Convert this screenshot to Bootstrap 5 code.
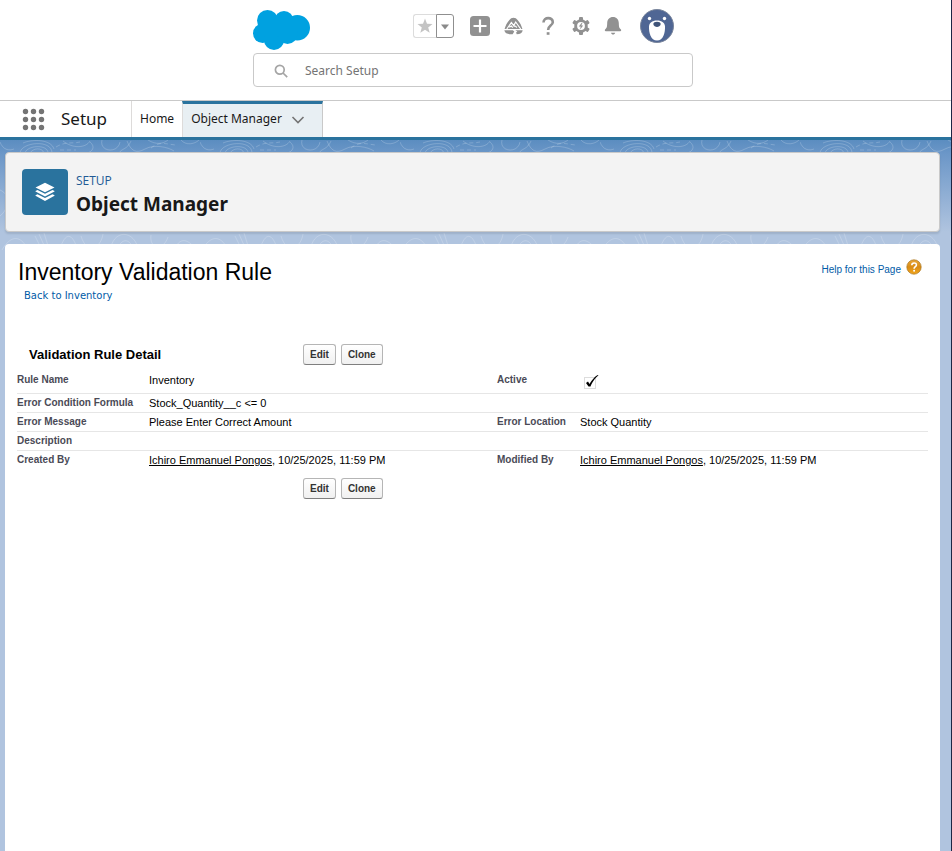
<!DOCTYPE html>
<html lang="en">
<head>
<meta charset="utf-8">
<meta name="viewport" content="width=device-width, initial-scale=1">
<title>Object Manager | Setup</title>
<link href="https://cdn.jsdelivr.net/npm/bootstrap@5.3.0/dist/css/bootstrap.min.css" rel="stylesheet">
<style>
  :root { --brand: #2a739e; --edge: #c9c9c9; --link: #015ba7; --icon: #919191; }
  body { font-family: "Noto Sans", "Open Sans", sans-serif; font-size: 12px; line-height: 20px; color: #181818; border-right: 1px solid #1d2745; }
  a { text-decoration: none; color: inherit; }
  a:hover { text-decoration: underline; }
  svg { display: block; flex: none; }

  .site-top { padding: 9px 5px 13px 0; border-bottom: 1px solid var(--edge); }
  .site-inner { width: 100%; max-width: 440px; }
  .tool-row { height: 44px; }
  .tools { margin-right: 19px; padding-bottom: 10px; gap: 14px; }
  .tool-btn { padding: 0; border: 0; background: none; color: var(--icon); }
  .fav { height: 24px; margin-right: 2px; }
  .fav-star, .fav-more { padding: 0; background: #fff; border: 1px solid #dcdcdc; }
  .fav-star { width: 23px; border-radius: 3px 0 0 3px; border-right: 0; }
  .fav-more { width: 18px; border-color: #8f8f8f; border-radius: 0 3px 3px 0; }
  .search-box { height: 34px; border: 1px solid var(--edge); border-radius: 4px; padding: 2px 0 0 20px; gap: 17px; }
  .search-box input { border: 0; outline: 0; padding: 0; font-size: 12px; color: #444; }
  .search-box input::placeholder { color: #747474; opacity: 1; }

  .app-nav { height: 39px; border-bottom: 3px solid var(--brand); }
  .waffle { padding: 0; border: 0; background: none; margin: 0 16px 0 22px; }
  .app-name { font-size: 17px; width: 70px; white-space: nowrap; }
  .tab-item { padding: 0 8px; border-left: 1px solid #dddbda; }
  .tab-current { background: #e8eff3; border-top: 3px solid var(--brand); border-right: 1px solid var(--edge); padding: 0 17px 3px 8px; gap: 9px; }
  .tab-current button { padding: 0; border: 0; background: none; }

  .stage {
    padding: 12px 11px 0 5px; gap: 12px;
    background-color: #b0c4df;
    background-image:
      url("data:image/svg+xml,%3Csvg xmlns='http://www.w3.org/2000/svg' width='200' height='112' fill='none' stroke='%23fff' stroke-opacity='.28' stroke-width='.7'%3E%3Cpath d='M0 2c3 8 9 9 14 7M20 13c1-11 32-14 32 0M25 13c2-8 23-9 23 0M30 13c3-5 12-6 14 0M23 3c9-4 28-4 31 6M131 1c-4 9-9 7-12 12M63 1c10 8 23 7 27 0M90 2c6 5 2 10-3 11M102 0c-3 12 16 14 18 2M127 1c4 10 9 13 18 8s23-2 29 2M148 0c8 5 15 4 20 0M181 0c5 6 14 4 18 0M0 50c12 5 8 20 0 26M197 40c-7 10-4 22 3 28M2 110c8-14 17-15 24-4M10 112c3-8 9-9 12 0M35 96l8 16M39 94l8 18M44 93l6 19M59 112c5-18 12-22 18-4M81 96c6 20 20 12 22-2M110 112c2-23 25-24 29 0M117 112c3-15 14-15 17 0M121 112c3-8 6-8 9 0M151 95c-2 14 12 17 17 2M173 112c7-17 15-12 22-4'/%3E%3Cpath d='M56 7c10-6 16-3 24-5M60 10h16M151 8c10-8 17-3 26-3' stroke-dasharray='4 3'/%3E%3C/svg%3E"),
      linear-gradient(#5b8dc0 0, #6c97c8 14px, #b0c4df 92px);
    background-repeat: repeat-x, no-repeat;
  }
  .head-card { background: #f3f3f3; border: 1px solid var(--edge); border-radius: 4px; box-shadow: 0 2px 2px rgba(0,0,0,.1); padding: 16px; gap: 8px; }
  .head-icon { width: 46px; height: 46px; border-radius: 4px; background: var(--brand); }
  .head-text { padding-top: 2px; }
  .head-over { font-family: "Open Sans", sans-serif; font-size: 12px; line-height: 20px; color: #215a95; }
  .head-title { font-size: 19px; line-height: 26px; font-weight: 700; margin: 0 0 -2px; }

  .sheet { background: #fff; border-radius: 4px 4px 0 0; padding: 14px 12px; font-family: "Liberation Sans", Arial, sans-serif; color: #000; }
  .sheet-title { font-size: 23px; line-height: 28px; margin: 0 0 0 1px; }
  .back-link { font-family: "DejaVu Sans", Verdana, sans-serif; font-size: 10px; line-height: 20px; color: var(--link); margin-left: 7px; }
  .help-link { font-size: 10px; color: var(--link); padding-right: 6px; gap: 5px; }
  .help-link span { padding-top: 2px; }
  .bar { gap: 5px; }
  .bar-top { margin-top: 38px; margin-bottom: 6px; }
  .bar-bottom { margin-top: 9px; }
  .bar-title { font-size: 13px; line-height: 20px; font-weight: 700; margin: 0; padding-left: 12px; }
  .bar-lead { width: 281px; flex: none; }
  .btn-classic { font-size: 10px; line-height: 13px; font-weight: 700; color: #333; padding: 3px 6px; border: 1px solid #b5b5b5; border-bottom-color: #7f7f7f; border-radius: 3px; background: linear-gradient(#fff, #f0f0f0); }
  .detail { width: 100%; table-layout: fixed; }
  .detail tr + tr { border-top: 1px solid #e6e6e6; }
  .detail th, .detail td { padding: 0; vertical-align: top; line-height: 18px; height: 18px; }
  .detail th { font-size: 10px; color: #4a4a56; white-space: nowrap; }
  .detail td { font-size: 11px; }
  .detail .tall > * { height: 22px; }
  .detail a { text-decoration: underline; }
  .col-label-a { width: 132px; }
  .col-label-b { width: 83px; }
  .tick { appearance: none; display: block; width: 16px; height: 14px; margin: 4px 0 0 4px; opacity: 1;
    background: url("data:image/svg+xml,%3Csvg xmlns='http://www.w3.org/2000/svg' width='16' height='14'%3E%3Crect x='.5' y='2.5' width='11' height='11' fill='none' stroke='%23bbb' stroke-dasharray='1 1'/%3E%3Cpath d='M2 8l2-1.500 1.500 2.500C8 5 11 1 14 0l.4.6C11 3 8 8 6.500 11.500H4.500Z'/%3E%3C/svg%3E") no-repeat; }
</style>
</head>
<body class="d-flex flex-column min-vh-100">

<header class="site-top">
  <div class="site-inner mx-auto">
    <div class="tool-row d-flex justify-content-between">
      <a href="#" aria-label="Salesforce home">
        <svg width="57" height="41" viewBox="0 0 57 41" fill="#00a1e0"><circle cx="14.500" cy="11.500" r="10.500"/><circle cx="31" cy="11.500" r="9.500"/><circle cx="44.300" cy="18.700" r="12.700"/><circle cx="9.700" cy="24.300" r="9.700"/><circle cx="21" cy="31" r="10"/><circle cx="34.500" cy="25" r="10"/><path d="M10 12h34v15H10z"/></svg>
      </a>
      <div class="tools d-flex align-items-center">
        <div class="fav d-flex">
          <button class="fav-star d-flex align-items-center justify-content-center" aria-label="Favorite this page"><svg width="16" height="16" viewBox="0 0 16 16" fill="#c4c4c4"><path d="M8 .6l2 5.200 5.500.2-4.300 3.400 1.500 5.400L8 11.700l-4.700 3.100 1.500-5.400L.5 6l5.500-.2z"/></svg></button>
          <button class="fav-more d-flex align-items-center justify-content-center" aria-label="Favorites list"><svg width="10" height="8" viewBox="0 0 10 8" fill="#8a8a8a"><path d="M1 2.500h8L5 7.500z"/></svg></button>
        </div>
        <button class="tool-btn" aria-label="Global actions"><svg width="20" height="20" viewBox="0 0 20 20"><rect width="20" height="20" rx="3.500" fill="currentColor"/><path d="M10 3.500v13M3.500 10h13" stroke="#fff" stroke-width="2.200"/></svg></button>
        <button class="tool-btn" aria-label="Guidance center"><svg width="20" height="20" viewBox="0 0 20 20" fill="currentColor"><path d="M5.200 4.200C7.500.9 11.500.9 13.800 4.200c2.200 2.500 3.800 5.500 4.600 8.800H.6c.8-3.300 2.400-6.300 4.600-8.800z"/><path d="M.3 14.300h8.500l1.500 1.200-1.700 2.700C4.500 18.500 1 17.700.3 14.300zM11.300 14.300h7.400c-.4 2.500-2.300 3.900-6 4l-.6-1.800 1.300-.9z"/><path d="M2.800 13l4.600-6.400 2.300 3 2-3.600 5 7M5.300 11.300l2-1.300 1.500 1.600M9.800 9.800l1.700.4 1.300 1.300" fill="none" stroke="#fff" stroke-width="1.200"/></svg></button>
        <button class="tool-btn" aria-label="Salesforce help"><svg width="20" height="20" viewBox="-1 0 20 20" fill="none" stroke="currentColor" stroke-width="2.600"><path d="M4.500 6.500C4.500.5 14 .8 13.800 6.200c-.2 3.600-4.700 3.300-4.700 7.800"/><path d="M7.700 17.500h2.800"/></svg></button>
        <button class="tool-btn" aria-label="Setup"><svg width="18" height="20" viewBox="0 0 18 20"><g fill="currentColor"><circle cx="9" cy="10" r="6.800"/><rect x="7" y="1" width="4" height="18" rx="1"/><rect x="7" y="1" width="4" height="18" rx="1" transform="rotate(60 9 10)"/><rect x="7" y="1" width="4" height="18" rx="1" transform="rotate(120 9 10)"/></g><circle cx="9" cy="10" r="3.900" fill="#fff"/><path d="M9.800 6.800L6.800 10.500h1.900l-.6 3 3.100-4H9.300l1.200-2.700z" fill="#919191"/></svg></button>
        <button class="tool-btn" aria-label="Notifications"><svg width="18" height="20" viewBox="0 0 18 20" fill="currentColor"><path d="M9 1C5.500 1 3.300 3.500 3.200 7c-.1 4-.4 5-1.900 6.200-.8.700-.6 2 .5 2h14.400c1.100 0 1.300-1.300.5-2C15.200 12 14.900 11 14.800 7 14.700 3.500 12.500 1 9 1zM7 16.800h4.200C10.700 19.200 7.500 19.200 7 16.800z"/></svg></button>
        <button class="tool-btn ms-1" aria-label="View profile"><svg width="34" height="34" viewBox="0 0 34 34"><circle cx="17" cy="17" r="16.500" fill="#4f6694" stroke="#7a869c"/><circle cx="9.500" cy="9.500" r="1.700" fill="#fff"/><circle cx="24.500" cy="9.500" r="1.700" fill="#fff"/><path d="M17 11.500c5 0 7.800 2.500 8 6 .2 6-1.600 14-8 14s-8.200-8-8-14c.2-3.500 3-6 8-6z" fill="#fff"/><path d="M13.300 15c0-2.900 7.400-2.900 7.400 0 0 2-2.400 3-3.700 3s-3.700-1-3.700-3z" fill="#3f5378"/></svg></button>
      </div>
    </div>
    <div class="search-box d-flex align-items-center">
      <svg width="14" height="14" viewBox="0 0 14 14" fill="none" stroke="#a5a5a5" stroke-width="1.700"><circle cx="5.800" cy="5.800" r="4.400"/><path d="M9 9l4.200 4.200"/></svg>
      <input class="flex-grow-1" type="search" placeholder="Search Setup" aria-label="Search Setup">
    </div>
  </div>
</header>

<nav class="app-nav d-flex align-items-stretch" aria-label="Setup">
  <button class="waffle" aria-label="App launcher"><svg width="23" height="23" viewBox="0 0 23 23" fill="#747474"><circle cx="3.500" cy="3.500" r="2.700"/><circle cx="11.500" cy="3.500" r="2.700"/><circle cx="19.500" cy="3.500" r="2.700"/><circle cx="3.500" cy="11.500" r="2.700"/><circle cx="11.500" cy="11.500" r="2.700"/><circle cx="19.500" cy="11.500" r="2.700"/><circle cx="3.500" cy="19.500" r="2.700"/><circle cx="11.500" cy="19.500" r="2.700"/><circle cx="19.500" cy="19.500" r="2.700"/></svg></button>
  <span class="app-name d-flex align-items-center">Setup</span>
  <a class="tab-item d-flex align-items-center" href="#">Home</a>
  <div class="tab-item tab-current d-flex align-items-center">
    <a href="#" aria-current="page">Object Manager</a>
    <button aria-label="Object Manager list"><svg width="14" height="9" viewBox="0 0 14 9" fill="none" stroke="#747474" stroke-width="1.600"><path d="M1.500 2L7 7.500 12.500 2"/></svg></button>
  </div>
</nav>

<main class="stage flex-grow-1 d-flex flex-column">
  <div class="head-card d-flex align-items-center">
    <div class="head-icon d-flex align-items-center justify-content-center">
      <svg width="20" height="20" viewBox="0 0 20 20" fill="#fff"><path d="M10 .8l9.500 4.700L10 10.300.5 5.500z"/><path d="M.5 9l2-1 7.500 3.800L17.500 8l2 1v.6L10 14.500.5 9.600z"/><path d="M.5 13.200l2-1L10 16l7.500-3.800 2 1v.6L10 18.900.5 13.800z"/></svg>
    </div>
    <div class="head-text">
      <div class="head-over">SETUP</div>
      <h1 class="head-title">Object Manager</h1>
    </div>
  </div>

  <section class="sheet flex-grow-1">
    <div class="d-flex justify-content-between align-items-start">
      <div>
        <h2 class="sheet-title">Inventory Validation Rule</h2>
        <a class="back-link d-block" href="#">Back to Inventory</a>
      </div>
      <a class="help-link d-flex align-items-start" href="#"><span>Help for this Page</span>
        <svg width="16" height="18" viewBox="0 0 16 18"><defs><linearGradient id="amber" x1="0" y1="0" x2="0" y2="1"><stop offset="0" stop-color="#e9a93c"/><stop offset=".5" stop-color="#d98c14"/><stop offset="1" stop-color="#f2a61c"/></linearGradient></defs><circle cx="8" cy="9" r="7.200" fill="url(#amber)" stroke="#a8741f" stroke-width=".7"/><path d="M5.800 7.200c0-3 4.700-2.900 4.600-.3 0 1.700-2.300 1.600-2.300 3.800" fill="none" stroke="#fff" stroke-width="1.600"/><circle cx="8.100" cy="12.700" r="1" fill="#fff"/></svg>
      </a>
    </div>

    <div class="bar bar-top d-flex align-items-center">
      <div class="bar-lead"><h3 class="bar-title">Validation Rule Detail</h3></div>
      <button class="btn-classic">Edit</button>
      <button class="btn-classic">Clone</button>
    </div>

    <table class="detail">
      <colgroup><col class="col-label-a"><col><col class="col-label-b"><col></colgroup>
      <tbody>
        <tr class="tall"><th scope="row">Rule Name</th><td>Inventory</td><th scope="row"><label for="active">Active</label></th><td><input class="tick" type="checkbox" id="active" checked disabled></td></tr>
        <tr><th scope="row">Error Condition Formula</th><td colspan="3">Stock_Quantity__c &lt;= 0</td></tr>
        <tr><th scope="row">Error Message</th><td>Please Enter Correct Amount</td><th scope="row">Error Location</th><td>Stock Quantity</td></tr>
        <tr><th scope="row">Description</th><td colspan="3"></td></tr>
        <tr><th scope="row">Created By</th><td><a href="#">Ichiro Emmanuel Pongos</a>, 10/25/2025, 11:59 PM</td><th scope="row">Modified By</th><td><a href="#">Ichiro Emmanuel Pongos</a>, 10/25/2025, 11:59 PM</td></tr>
      </tbody>
    </table>

    <div class="bar bar-bottom d-flex align-items-center">
      <div class="bar-lead"></div>
      <button class="btn-classic">Edit</button>
      <button class="btn-classic">Clone</button>
    </div>
  </section>
</main>

<script src="https://cdn.jsdelivr.net/npm/bootstrap@5.3.0/dist/js/bootstrap.bundle.min.js"></script>
</body>
</html>
